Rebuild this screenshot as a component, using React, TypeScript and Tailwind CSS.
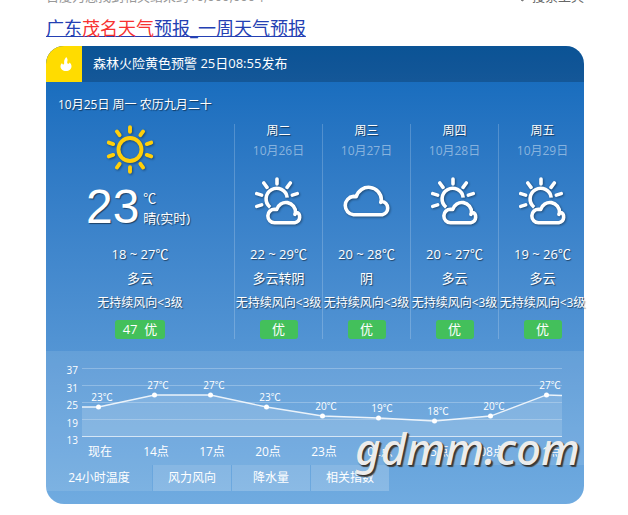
import { useState } from 'react';
import { clsx } from 'clsx';

type Sky = 'partly' | 'cloudy';

interface Forecast {
  day: string;
  date: string;
  sky: Sky;
  temp: string;
  desc: string;
  wind: string;
  air: string;
}

const FORECASTS: Forecast[] = [
  { day: '周二', date: '10月26日', sky: 'partly', temp: '22 ~ 29℃', desc: '多云转阴', wind: '无持续风向<3级', air: '优' },
  { day: '周三', date: '10月27日', sky: 'cloudy', temp: '20 ~ 28℃', desc: '阴', wind: '无持续风向<3级', air: '优' },
  { day: '周四', date: '10月28日', sky: 'partly', temp: '20 ~ 27℃', desc: '多云', wind: '无持续风向<3级', air: '优' },
  { day: '周五', date: '10月29日', sky: 'partly', temp: '19 ~ 26℃', desc: '多云', wind: '无持续风向<3级', air: '优' },
];

// y is the point's height inside the 480x76 chart
const HOURS = [
  { label: '现在', temp: 23, y: 45 },
  { label: '14点', temp: 27, y: 33 },
  { label: '17点', temp: 27, y: 33 },
  { label: '20点', temp: 23, y: 45 },
  { label: '23点', temp: 20, y: 54 },
  { label: '02点', temp: 19, y: 56 },
  { label: '05点', temp: 18, y: 59 },
  { label: '08点', temp: 20, y: 54 },
  { label: '11点', temp: 27, y: 33 },
];

const AXIS = [37, 31, 25, 19, 13];
const TABS = ['24小时温度', '风力风向', '降水量', '相关指数'];

const shadow = '[text-shadow:1px_1px_1px_rgba(0,0,0,0.5)]';
const iconShadow = 'drop-shadow-[1px_1px_1px_rgba(0,0,0,0.4)]';

function FlameIcon() {
  return (
    <svg viewBox="0 0 12 14" className="h-3.5 w-3" fill="#fff" aria-hidden="true">
      <path d="M6.2 0C7.6 1.6 7.9 3 7.3 4.6c-.3.9-.2 1.6.3 2 .8.6 1.7.1 1.9-1.1 1.300 1 2 2.200 2 3.700C11.500 12 9.200 14 6 14S.5 12.200.5 9.500c0-1.400.6-2.500 1.600-3.400 0 .9.500 1.500 1.200 1.400 1-.1.900-1.200.8-2.300C4 3.200 5 1.500 6.200 0Z" />
    </svg>
  );
}

function SunIcon() {
  return (
    <svg viewBox="0 0 50 50" className={clsx('h-[50px] w-[50px]', iconShadow)} fill="none" stroke="#ffcf0a" strokeWidth="3.900" strokeLinecap="round" aria-hidden="true">
      <circle cx="25" cy="25.500" r="11.500" />
      {Array.from({ length: 10 }, (_, i) => (
        <path key={i} d="M25 7.800V3.200" transform={`rotate(${i * 36} 25 25.5)`} />
      ))}
    </svg>
  );
}

function SkyIcon({ sky }: { sky: Sky }) {
  return (
    <svg viewBox="0 0 48 48" className={clsx('h-12 w-12', iconShadow)} fill="none" stroke="#fff" strokeWidth="3.600" strokeLinecap="round" strokeLinejoin="round" aria-hidden="true">
      {sky === 'partly' ? (
        <>
          <path d="M22 2v5M8.800 6l3.200 4.400M35.300 6l-3.200 4.400M1.800 16.600l4.800 1.500M42.200 16.600l-4.800 1.500M1.800 29.400l4.800-1.500" />
          <path d="M15.200 30.300A10.600 10.600 0 1 1 32.200 20.600" strokeLinecap="butt" />
          <path d="M19.500 45.700a6.700 6.700 0 0 1 .2-13.500l2 .2a9.600 9.600 0 0 1 18.800 3.200l-.6 1.800M40.600 34.600a5.700 5.700 0 0 1-.8 11.100H19.500" />
        </>
      ) : (
        <path d="M10.500 37.700a9.200 9.200 0 0 1 0-18.300l2.800.2a12.800 12.800 0 0 1 25.100 3.100l-.6 2.700M38.800 24.500a6.700 6.700 0 0 1 .6 13.200H10.500" />
      )}
    </svg>
  );
}

function Summary({ temp, desc, wind, air }: Pick<Forecast, 'temp' | 'desc' | 'wind' | 'air'>) {
  return (
    <>
      <span className={clsx('text-[13px] leading-5', shadow)}>{temp}</span>
      <span className={clsx('mt-0.5 text-[13px] leading-6', shadow)}>{desc}</span>
      <span className={clsx('mt-[3px] leading-5', shadow)}>{wind}</span>
      <span className="mt-[7px] min-w-[38px] rounded-[3px] bg-[#43c05b] px-2 text-center text-[13px] leading-[19px] whitespace-pre">
        {air}
      </span>
    </>
  );
}

function TempChart() {
  const line = HOURS.map(({ y }, i) => `L${16.5 + i * 56} ${y}`).join('');
  const path = `M0 45${line}L480 33.5`;
  return (
    <svg viewBox="0 0 480 76" className="block w-full overflow-visible" role="img" aria-label="24小时温度">
      {AXIS.map((v, i) => (
        <path key={v} d={`M0 ${6.5 + i * 17}H480`} stroke="#fff" strokeOpacity={i === 4 ? 0.7 : 0.25} />
      ))}
      <path d={`${path}V74H0Z`} fill="#fff" fillOpacity="0.14" />
      <path d={path} fill="none" stroke="#fff" strokeOpacity="0.85" strokeWidth="1.300" />
      {HOURS.map(({ label, temp, y }, i) => (
        <g key={label} fill="#fff">
          <circle cx={16.5 + i * 56} cy={y} r="2.500" />
          <text x={20 + i * 56} y={y - 6} textAnchor="middle" className="text-[10px]">
            {temp}℃
          </text>
        </g>
      ))}
    </svg>
  );
}

export default function App() {
  const [active, setActive] = useState(0);

  return (
    <main className="bg-white pr-11 pb-3 pl-[46px] font-['Open_Sans','Noto_Sans_CJK_SC',sans-serif] text-xs">
      <div className="flex h-1 items-end justify-between overflow-hidden text-[13px] leading-4">
        <span className="text-[#999]">百度为您找到相关结果约10,000,000个</span>
        <button type="button" className="flex items-center gap-1 text-[#666]">
          <svg viewBox="0 0 12 12" className="h-3 w-3" fill="none" stroke="currentColor" aria-hidden="true">
            <path d="M1 1h10L7 6v5L5 10V6Z" />
          </svg>
          搜索工具
        </button>
      </div>

      <h3 className="mt-2.5 text-lg leading-7">
        <a href="#weather" className="text-[#2440b3] underline decoration-1 underline-offset-1">
          广东<em className="text-[#f73131] not-italic">茂名天气</em>预报_一周天气预报
        </a>
      </h3>

      <section id="weather" className="relative mt-1 rounded-[18px] bg-linear-to-b from-[#0d68bb] to-[#70abe0] text-white">
        <header className="flex h-9 items-center overflow-hidden rounded-t-[18px] bg-black/20">
          <span className="flex h-9 w-9 items-center justify-center bg-[#ffdc00] pl-1">
            <FlameIcon />
          </span>
          <span className="pl-[11px] text-[13px]">森林火险黄色预警 25日08:55发布</span>
        </header>

        <p className={clsx('px-3 pt-[13px] leading-5', shadow)}>10月25日 周一 农历九月二十</p>

        <div className="-mr-0.5 grid grid-cols-[188fr_88fr_88fr_88fr_88fr] pt-[9px] pb-3">
          <div className="flex flex-col items-center">
            <div className="mr-5">
              <SunIcon />
            </div>
            <div className="mt-2 mr-1 mb-3 flex h-[50px] items-center">
              <span className={clsx("font-['Liberation_Sans',sans-serif] text-[48px] leading-[50px]", shadow)}>23</span>
              <span className={clsx('flex flex-col pt-0.5 pl-1 text-[13px] leading-5', shadow)}>
                <span>℃</span>
                <span>晴(实时)</span>
              </span>
            </div>
            <Summary temp="18 ~ 27℃" desc="多云" wind="无持续风向<3级" air="47  优" />
          </div>
          {FORECASTS.map(({ day, date, sky, ...rest }) => (
            <div key={date} className="flex flex-col items-center border-l border-white/20 whitespace-nowrap">
              <span className={clsx('-mt-[3px] leading-5', shadow)}>{day}</span>
              <span className="leading-5 text-white/45">{date}</span>
              <div className="mt-4 mb-[19px]">
                <SkyIcon sky={sky} />
              </div>
              <Summary {...rest} />
            </div>
          ))}
        </div>

        <div className="flex gap-1 bg-white/10 pt-[11px] pr-[22px] pb-[5px] pl-4">
          <div className="flex h-[86px] w-4 flex-col justify-between text-right text-[10px] leading-4">
            {AXIS.map((v) => (
              <span key={v}>{v}</span>
            ))}
          </div>
          <div className="min-w-0 flex-1">
            <TempChart />
            <div className="mt-1.5 -mr-3.5 -ml-2.5 grid grid-cols-9 text-center leading-4">
              {HOURS.map(({ label }) => (
                <span key={label}>{label}</span>
              ))}
            </div>
          </div>
        </div>

        <div className="flex items-start gap-px pb-[13px]" role="tablist">
          {TABS.map((tab, i) => (
            <button
              key={tab}
              type="button"
              role="tab"
              aria-selected={i === active}
              onClick={() => setActive(i)}
              className={clsx(
                'leading-[26px]',
                i === 0 ? 'w-[106px]' : 'w-[78px]',
                i === active ? 'bg-white/10' : 'bg-white/20',
              )}
            >
              {tab}
            </button>
          ))}
        </div>

        <span className="pointer-events-none absolute right-1 bottom-[26px] font-['Noto_Sans',sans-serif] text-[44px] leading-[60px] font-medium text-[#ececec] italic [text-shadow:1px_1px_1px_#333,2px_2px_1px_#444]">
          gdmm.com
        </span>
      </section>
    </main>
  );
}
